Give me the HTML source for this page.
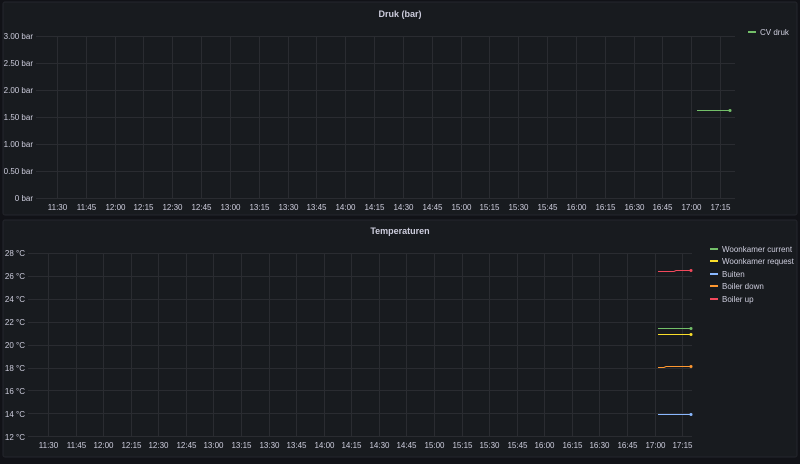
<!DOCTYPE html>
<html><head><style>
body{margin:0;background:#111217;width:800px;height:459px;overflow:hidden}
svg text{font-family:"Liberation Sans",sans-serif;font-size:8px;fill:#ccccdc}
</style></head><body>
<svg width="800" height="459" xmlns="http://www.w3.org/2000/svg">
<rect x="3" y="2" width="794" height="213" rx="2" fill="#181b1f" stroke="#24262c"/>
<rect x="3" y="220" width="794" height="237" rx="2" fill="#181b1f" stroke="#24262c"/>
<text x="400" y="17" text-anchor="middle" style="font-weight:bold;font-size:9px">Druk (bar)</text>
<text x="400" y="234" text-anchor="middle" style="font-weight:bold;font-size:9px">Temperaturen</text>
<g id="top" stroke="#2a2c31" stroke-width="1">
<line x1="36" x2="735" y1="36.5" y2="36.5"/><line x1="36" x2="735" y1="63.5" y2="63.5"/><line x1="36" x2="735" y1="90.5" y2="90.5"/><line x1="36" x2="735" y1="117.5" y2="117.5"/><line x1="36" x2="735" y1="144.5" y2="144.5"/><line x1="36" x2="735" y1="171.5" y2="171.5"/><line x1="36" x2="735" y1="198.5" y2="198.5"/>
</g>
<g text-anchor="end">
<text x="33" y="39">3.00 bar</text><text x="33" y="66">2.50 bar</text><text x="33" y="93">2.00 bar</text><text x="33" y="120">1.50 bar</text><text x="33" y="147">1.00 bar</text><text x="33" y="174">0.50 bar</text><text x="33" y="201">0 bar</text>
</g>
<g id="topx"></g>
<line x1="697" x2="730" y1="110.5" y2="110.5" stroke="#73bf69" stroke-width="1"/><circle cx="730" cy="110.5" r="1.5" fill="#73bf69"/>
<rect x="748" y="31" width="8" height="2" fill="#73bf69"/><text x="760" y="35">CV druk</text>
<g id="bot" stroke="#2a2c31"></g>
<g text-anchor="end">
<text x="25" y="256">28 °C</text><text x="25" y="279">26 °C</text><text x="25" y="302">24 °C</text><text x="25" y="325">22 °C</text><text x="25" y="348">20 °C</text><text x="25" y="371">18 °C</text><text x="25" y="394">16 °C</text><text x="25" y="417">14 °C</text><text x="25" y="440">12 °C</text>
</g>
<g id="botx"></g>
<g fill="none" stroke-width="1">
<path d="M658 271.5H674L676 270.5H691" stroke="#f2495c"/>
<path d="M658 328.5H691" stroke="#73bf69"/>
<path d="M658 334.5H691" stroke="#fade2a"/>
<path d="M658 367.5H664L666 366.5H691" stroke="#ff9830"/>
<path d="M658 414.5H691" stroke="#8ab8ff"/>
</g>
<circle cx="691" cy="270.5" r="1.5" fill="#f2495c"/><circle cx="691" cy="328.5" r="1.5" fill="#73bf69"/><circle cx="691" cy="334.5" r="1.5" fill="#fade2a"/><circle cx="691" cy="366.5" r="1.5" fill="#ff9830"/><circle cx="691" cy="414.5" r="1.5" fill="#8ab8ff"/>
<rect x="710" y="248" width="8" height="2" fill="#73bf69"/><text x="722" y="252">Woonkamer current</text>
<rect x="710" y="260" width="8" height="2" fill="#fade2a"/><text x="722" y="264">Woonkamer request</text>
<rect x="710" y="273" width="8" height="2" fill="#8ab8ff"/><text x="722" y="277">Buiten</text>
<rect x="710" y="285" width="8" height="2" fill="#ff9830"/><text x="722" y="289">Boiler down</text>
<rect x="710" y="298" width="8" height="2" fill="#f2495c"/><text x="722" y="302">Boiler up</text>
</svg>
<script>
var ns="http://www.w3.org/2000/svg";
function el(p,t,a,txt){var e=document.createElementNS(ns,t);for(var k in a)e.setAttribute(k,a[k]);if(txt)e.textContent=txt;document.getElementById(p).appendChild(e);}
var L=["11:30","11:45","12:00","12:15","12:30","12:45","13:00","13:15","13:30","13:45","14:00","14:15","14:30","14:45","15:00","15:15","15:30","15:45","16:00","16:15","16:30","16:45","17:00","17:15"];
for(var i=0;i<24;i++){var x=Math.round(57+i*28.83)+.5;el("top","line",{x1:x,x2:x,y1:36,y2:199});el("topx","text",{x:x,y:210,"text-anchor":"middle"},L[i]);
var x2=Math.round(48+i*27.57)+.5;el("bot","line",{x1:x2,x2:x2,y1:253,y2:437});el("botx","text",{x:x2,y:448,"text-anchor":"middle"},L[i]);}
for(var j=0;j<9;j++){var y=Math.round(253+j*22.9)+.5;el("bot","line",{x1:28,x2:692,y1:y,y2:y});}
</script>
</body></html>
